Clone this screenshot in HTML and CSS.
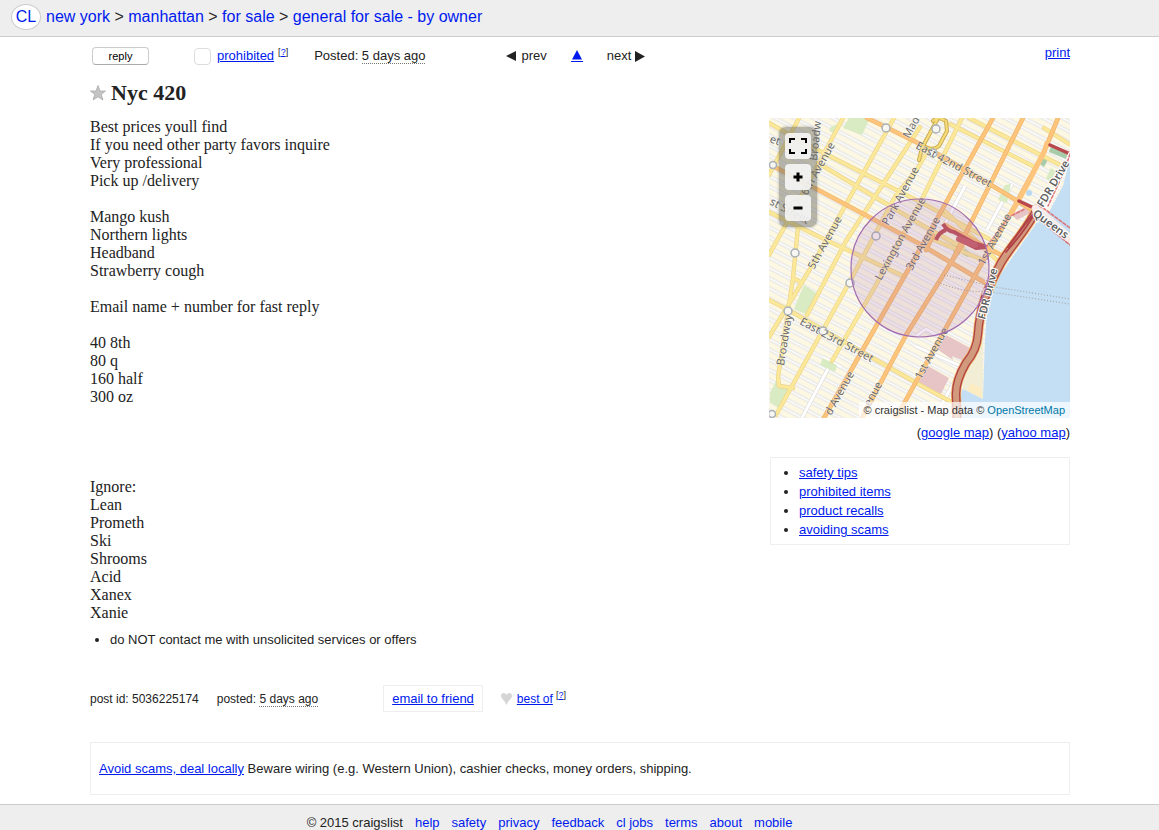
FILE: index.html
```html
<!DOCTYPE html>
<html lang="en">
<head>
<meta charset="utf-8">
<title>Nyc 420</title>
<link rel="stylesheet" href="styles.css">
</head>
<body>
<header class="crumbs">
  <a class="logo" href="#">CL</a>
  <nav><a href="#">new york</a> &gt; <a href="#">manhattan</a> &gt; <a href="#">for sale</a> &gt; <a href="#">general for sale - by owner</a></nav>
</header>
<div class="page">
  <div class="toolbar">
    <button class="reply" type="button">reply</button>
    <div class="flag"><button class="flagbox" type="button" aria-label="flag as prohibited"></button><a href="#">prohibited</a><sup>[<a href="#">?</a>]</sup></div>
    <p class="posted">Posted: <time>5 days ago</time></p>
    <div class="pager">
      <span class="step"><svg width="10" height="10" viewBox="0 0 10 10"><path d="M0 5L10 0V10Z" fill="#222"/></svg>prev</span>
      <a class="up" href="#" aria-label="up to list"><svg width="12" height="12" viewBox="0 0 12 12"><path d="M1 9.500L6 0L11 9.500Z" fill="#001aee"/><path d="M0 11h12v1H0z" fill="#001aee"/></svg></a>
      <span class="step next">next<svg width="10" height="11" viewBox="0 0 10 11"><path d="M0 0L10 5.500L0 11Z" fill="#222"/></svg></span>
    </div>
    <a class="print" href="#">print</a>
  </div>
  <h1><svg width="16" height="16" viewBox="0 0 16 16"><path d="M8 .5L10 6H15.500L11.200 9.400L13 15L8 11.800L3 15L4.800 9.400L.5 6H6Z" fill="#c4c4c4" stroke="#aaa" stroke-width=".8"/></svg>Nyc 420</h1>
  <main class="columns">
    <section class="body">
      <div class="text">Best prices youll find
If you need other party favors inquire
Very professional
Pick up /delivery

Mango kush
Northern lights
Headband
Strawberry cough

Email name + number for fast reply

40 8th
80 q
160 half
300 oz




Ignore:
Lean
Prometh
Ski
Shrooms
Acid
Xanex
Xanie</div>
      <ul class="notices"><li>do NOT contact me with unsolicited services or offers</li></ul>
    </section>
    <aside class="side">
      <div class="map">
        <svg class="tiles" viewBox="0 0 301 300" preserveAspectRatio="xMidYMid slice" role="img" aria-label="Map of Midtown Manhattan">
          <defs>
            <pattern id="blocks" width="76" height="9" patternUnits="userSpaceOnUse" patternTransform="translate(2 3) rotate(28)">
              <rect width="76" height="9" fill="#fcf8e4"/>
              <path d="M0 4.500H76" stroke="#d9d7d8" stroke-width="3.400"/>
              <path d="M0 4.500H76" stroke="#fff" stroke-width="2"/>
            </pattern>
            <path id="yellow" d="M74 0L16 108L0 137M125 0L41 151L0 219M151 9L77 123L38 197M158 34L147 53L127 77L80 165L54 212L7 297M193 0L152 83L107 167L63 243M0 5L33 24L151 84L220 121M49 45L151 106L194 130M0 94L53 120L134 158M200 0L291 47M181 6L266 49M275 10L300 26M0 182L23 194L151 267L188 287M30 0L0 57M29 109L24 160L19 193L9 259L10 268L24 270M24 160L33 165M176 93L232 146M165 122L214 142"/>
            <path id="orange" d="M98 0L151 26L219 65L263 92M4 48L151 126L218 166M224 0L169 99L139 152L55 300M254 0L183 143L137 217L93 300M289 0L275 34L243 93L209 152L148 262L127 300M176 107L234 138M157 132L164 118M183 143L196 122"/>
            <path id="lanes" d="M63 243L33 300M54 239L72 249M196 68L169 119M243 66L218 112M147 218L157 211L193 231M146 228L194 249M165 300L205 229"/>
            <path id="drive" d="M268 91C258 112 241 129 232 145Q222 163 216 180Q210 199 209 216Q208 232 197 245Q187 262 187 276L188 300"/>
          </defs>
          <rect width="301" height="300" fill="url(#blocks)"/>
          <g fill="none"><use href="#lanes" stroke="#d9d7d8" stroke-width="4"/><use href="#lanes" stroke="#fff" stroke-width="3"/></g>
          <g fill="#d8ebc2"><path d="M80 0H101L93 17L74 10ZM62 9L68 6L65 15L60 13ZM35 167L49 176L39 197L25 191ZM54 240L68 247L66 254L51 247ZM7 263L21 272L12 292L1 284V275Z"/><path d="M236 67L242 66L238 85L229 82ZM282 50L287 53L281 64L277 60Z"/></g>
          <path d="M282 28L299 36L297 41L280 34ZM275 37L280 40L275 49L271 46ZM188 126L194 130L190 137L184 133ZM196 131L202 135L199 139L193 136Z" fill="#a8ccaa"/>
          <path d="M177 217L203 231L195 243L183 238L184 242L168 231ZM159 248L180 260L172 276L149 265ZM242 96L257 89L263 94L248 102Z" fill="#e7c4c5"/>
          <path d="M301 40L294 68L280 94L269 103L245 137L226 164L218 194L216 221L214 281L205 276L194 271L189 284L186 300H301Z" fill="#c4dff4"/>
          <path d="M214 213L214 281L194 271L193 260L207 239Z" fill="#f2eed6"/>
          <path d="M201 265L212 270L213 280L199 273Z" fill="#fdebc1"/>
          <circle cx="260" cy="75" r="3" fill="#b8d9f2"/>
          <g fill="none" stroke-linecap="round" stroke-linejoin="round">
            <use href="#yellow" stroke="#ecd58c" stroke-width="4.400"/>
            <use href="#yellow" stroke="#fbe898" stroke-width="3"/>
            <use href="#orange" stroke="#eeb46b" stroke-width="4.600"/>
            <use href="#orange" stroke="#fdc47c" stroke-width="3.200"/>
            <path d="M278 25L275 34L258 67L243 94" stroke="#fdc47c" stroke-width="5"/>
            <path d="M150 42L153 30L168 2M177 3L178 13L170 28Q164 33 156 29M164 3Q169-2 175 2" stroke="#c9aa4e" stroke-width="4"/>
            <path d="M150 42L153 30L168 2M177 3L178 13L170 28Q164 33 156 29M164 3Q169-2 175 2" stroke="#f5dc79" stroke-width="2.200"/>
            <path d="M174 106Q178 113 185 114L205 125L217 129M189 121L207 130L217 129M177 112Q170 114 167 122" stroke="#bd5157" stroke-width="4" stroke-linecap="butt"/>
            <path d="M190 121L206 127" stroke="#c86268" stroke-width="6"/>
            <path d="M250 83L267 91M281 27L301 36" stroke="#b9484d" stroke-width="3.500"/>
            <path d="M301 36L295 54L279 88L264 98" stroke="#fff" stroke-width="4"/>
            <path d="M301 36L295 54L279 88M218 128L240 99L256 91" stroke="#dc7478" stroke-width="1.600" stroke-dasharray="3 2"/>
            <use href="#drive" stroke="#edae62" stroke-width="10"/>
            <use href="#drive" stroke="#b04045" stroke-width="8.500"/>
            <use href="#drive" stroke="#d29a7c" stroke-width="6"/>
            <path d="M267 93Q256 113 237 134M263 97L239 129" stroke="#b04045" stroke-width="1.800"/>
            <path d="M267 91L301 121" stroke="#f7ebe9" stroke-width="9"/>
            <path d="M270 87L301 110M266 98L301 127" stroke="#dc7478" stroke-width="1.600" stroke-dasharray="3 2"/>
            <path d="M175 157L226 169L301 181M169 164Q190 174 222 174L301 186" stroke="#aaa" stroke-width="1.200" stroke-dasharray="1 2" stroke-linecap="butt"/>
          </g>
          <g fill="#f8f6f0" stroke="#a8b0b8" stroke-width="1.500"><circle cx="117" cy="10" r="4"/><circle cx="4" cy="47" r="3.500"/><circle cx="26" cy="135" r="4"/><circle cx="107" cy="118" r="4"/><circle cx="81" cy="165" r="4"/><circle cx="19" cy="193" r="4"/><circle cx="54" cy="213" r="4"/><circle cx="167" cy="11" r="4"/><circle cx="164" cy="35" r="4"/><circle cx="3" cy="296" r="3.500"/><circle cx="26" cy="86" r="4"/></g>
          <g class="labels">
            <text transform="translate(45 152) rotate(-61)">5th Avenue</text>
            <text transform="translate(38 78) rotate(-61)">6th Avenue</text>
            <text transform="translate(48 43) rotate(-84)">Broadw</text>
            <text transform="translate(140 21) rotate(-61)">Madi</text>
            <text transform="translate(119 108) rotate(-61)">Park Avenue</text>
            <text transform="translate(112 163) rotate(-61)">Lexington Avenue</text>
            <text transform="translate(143 153) rotate(-61)">3rd Avenue</text>
            <text transform="translate(215 148) rotate(-61)">1st Avenue</text>
            <text transform="translate(152 262) rotate(-61)">1st Avenue</text>
            <text transform="translate(62 298) rotate(-61)">d Avenue</text>
            <text transform="translate(101 289) rotate(-61)">enue</text>
            <text transform="translate(15 248) rotate(-81)">Broadway</text>
            <text transform="translate(146 30) rotate(28)">East 42nd Street</text>
            <text transform="translate(30 206) rotate(28)">East 23rd Street</text>
            <text transform="translate(0 86) rotate(28)">st Street</text>
            <text transform="translate(0 24) rotate(20)">et</text>
            <text class="strong" transform="translate(274 90) rotate(-59)">FDR Drive</text>
            <text class="strong" transform="translate(216 202) rotate(-76)">FDR Drive</text>
            <text class="strong" transform="translate(263 97) rotate(36)">Queens</text>
          </g>
          <circle cx="151" cy="150" r="69" fill="#a060a8" fill-opacity=".16" stroke="#a36bb0" stroke-width="1.200"/>
        </svg>
        <div class="controls">
          <button type="button" aria-label="Full screen"><svg width="18" height="16" viewBox="0 0 18 16"><path d="M1 5V1H6M12 1H17V5M17 11V15H12M6 15H1V11" fill="none" stroke="#000" stroke-width="2"/></svg></button>
          <button type="button" aria-label="Zoom in"><svg width="10" height="10" viewBox="0 0 10 10"><path d="M5 .5V9.500M.5 5H9.500" stroke="#000" stroke-width="3"/></svg></button>
          <button type="button" aria-label="Zoom out"><svg width="10" height="10" viewBox="0 0 10 10"><path d="M.5 5H9.500" stroke="#000" stroke-width="3"/></svg></button>
        </div>
        <div class="credit">© craigslist - Map data © <a href="#">OpenStreetMap</a></div>
      </div>
      <p class="maplinks">(<a href="#">google map</a>) (<a href="#">yahoo map</a>)</p>
      <ul class="tips">
        <li><a href="#">safety tips</a></li>
        <li><a href="#">prohibited items</a></li>
        <li><a href="#">product recalls</a></li>
        <li><a href="#">avoiding scams</a></li>
      </ul>
    </aside>
  </main>
  <div class="info">
    <p class="postid">post id: 5036225174</p>
    <p class="when">posted: <time>5 days ago</time></p>
    <a class="email" href="#">email to friend</a>
    <div class="best"><svg width="11" height="12" viewBox="0 0 11 12"><path d="M5.500 12Q4.500 9 1.500 6Q0 4.500 0 3Q0 0 2.800 0Q4.800 0 5.500 2Q6.200 0 8.200 0Q11 0 11 3Q11 4.500 9.500 6Q6.500 9 5.500 12Z" fill="#d5d5d5"/></svg><a href="#">best of</a><sup>[<a href="#">?</a>]</sup></div>
  </div>
  <p class="warning"><a href="#">Avoid scams, deal locally</a> Beware wiring (e.g. Western Union), cashier checks, money orders, shipping.</p>
</div>
<footer class="foot">
  <span>© 2015 craigslist</span>
  <a href="#">help</a><a href="#">safety</a><a href="#">privacy</a><a href="#">feedback</a><a href="#">cl jobs</a><a href="#">terms</a><a href="#">about</a><a href="#">mobile</a>
</footer>
</body>
</html>
```
FILE: styles.css
```css
* { box-sizing: border-box; }
body { margin: 0; background: #fff; color: #222; font: 13px/18px "Liberation Sans", Arial, sans-serif; }
p, ul, h1 { margin: 0; }
a { color: #001aee; }
svg { flex: none; }
.crumbs { display: flex; align-items: center; gap: 5px; height: 37px; padding: 0 11px 2px; background: #eee; border-bottom: 1px solid #ccc; font-size: 16px; }
.crumbs a { text-decoration: none; }
.crumbs .logo { width: 30px; height: 26px; border: 1px solid #ccc; border-radius: 50%; background: #fff; line-height: 24px; text-align: center; }
.page { padding: 0 89px 0 90px; }
.toolbar { display: flex; align-items: center; height: 38px; padding-left: 2px; }
.reply { width: 57px; height: 18px; padding: 0; border: 1px solid #ccc; border-bottom-color: #aaa; border-radius: 4px; background: #fff; color: #000; font: 11px/14px "Liberation Sans", Arial, sans-serif; }
.flag { display: flex; align-items: center; margin-left: 45px; }
.flagbox { width: 17px; height: 17px; margin-right: 6px; padding: 0; border: 1px solid #ddd; border-radius: 4px; background: #fff; }
sup { margin: -8px 0 0 4px; font-size: 9px; line-height: 12px; }
.posted { margin-left: 26px; }
time { border-bottom: 1px dotted #777; }
.pager { display: flex; align-items: center; margin-left: 81px; }
.step { display: flex; align-items: center; gap: 5px; }
.step.next { gap: 4px; }
.up { display: flex; margin: 0 24px; }
.print { margin: -6px 0 0 auto; }
h1 { display: flex; align-items: center; gap: 5px; height: 36px; font: bold 22px/26px "Liberation Serif", "Times New Roman", serif; }
.columns { display: flex; justify-content: space-between; margin-top: 7px; }
.text { white-space: pre-line; font: 16px/18px "Liberation Serif", "Times New Roman", serif; }
.notices { margin-top: 9px; padding-left: 20px; }
.side { flex: none; width: 301px; }
.map { position: relative; aspect-ratio: 301 / 300; overflow: hidden; }
.tiles { display: block; width: 100%; height: 100%; }
.labels { fill: #6a6a6a; font: 11px "Noto Sans", sans-serif; stroke: #fff; stroke-width: 1px; stroke-opacity: .6; paint-order: stroke; }
.labels .strong { font-weight: 600; stroke-width: 2px; stroke-opacity: 1; fill: #606060; }
.controls { position: absolute; top: 9px; left: 10px; display: flex; flex-direction: column; gap: 5px; padding: 6px; border-radius: 7px; background: rgba(100, 100, 90, .45); box-shadow: 0 0 3px rgba(0, 0, 0, .3); }
.controls button { display: flex; align-items: center; justify-content: center; width: 26px; height: 26px; padding: 0; border: 0; border-radius: 4px; background: rgba(248, 248, 248, .88); }
.credit { position: absolute; right: 0; bottom: 0; padding: 0 5px; background: rgba(255, 255, 255, .7); color: #333; font-size: 11px; line-height: 16px; }
.credit a { color: #0078a8; text-decoration: none; }
.maplinks { margin-top: 6px; text-align: right; }
.tips { margin: 15px 0 0 1px; padding: 5px 0 5px 28px; border: 1px solid #eee; line-height: 19px; }
.info { display: flex; align-items: center; margin-top: 36px; font-size: 12px; }
.when { margin-left: 18px; }
.email { margin-left: 65px; padding: 4px 8px; border: 1px solid #eee; font-size: 13px; line-height: 17px; }
.best { display: flex; align-items: center; margin-left: 18px; }
.best svg { margin-right: 5px; }
.best sup { margin-left: 3px; }
.warning { margin: 30px 0 9px; padding: 17px 8px; border: 1px solid #eee; line-height: 17px; }
.foot { display: flex; justify-content: center; gap: 12px; padding: 9px 60px 10px 0; background: #eee; border-top: 1px solid #ccc; }
.foot a { text-decoration: none; }
```
